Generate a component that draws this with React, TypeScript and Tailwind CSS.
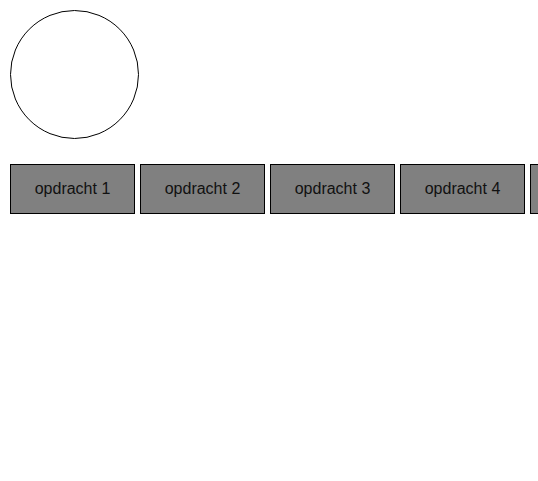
import React from 'react';

const opdrachten = ['opdracht 1', 'opdracht 2', 'opdracht 3', 'opdracht 4', 'opdracht 5'];

export default function App() {
  return (
    <div className="w-[538px] h-[481px] overflow-hidden bg-white p-[10px] font-['Liberation_Sans',Arial,sans-serif]">
      {/* cirkel */}
      <div className="w-[129px] h-[129px] rounded-full border border-black" />

      {/* knoppen */}
      <div className="mt-[25px] flex gap-[5px]">
        {opdrachten.map((o) => (
          <button
            key={o}
            className="shrink-0 w-[125px] h-[50px] bg-[#808080] border border-black text-[16px] text-[#111]"
          >
            {o}
          </button>
        ))}
      </div>
    </div>
  );
}
